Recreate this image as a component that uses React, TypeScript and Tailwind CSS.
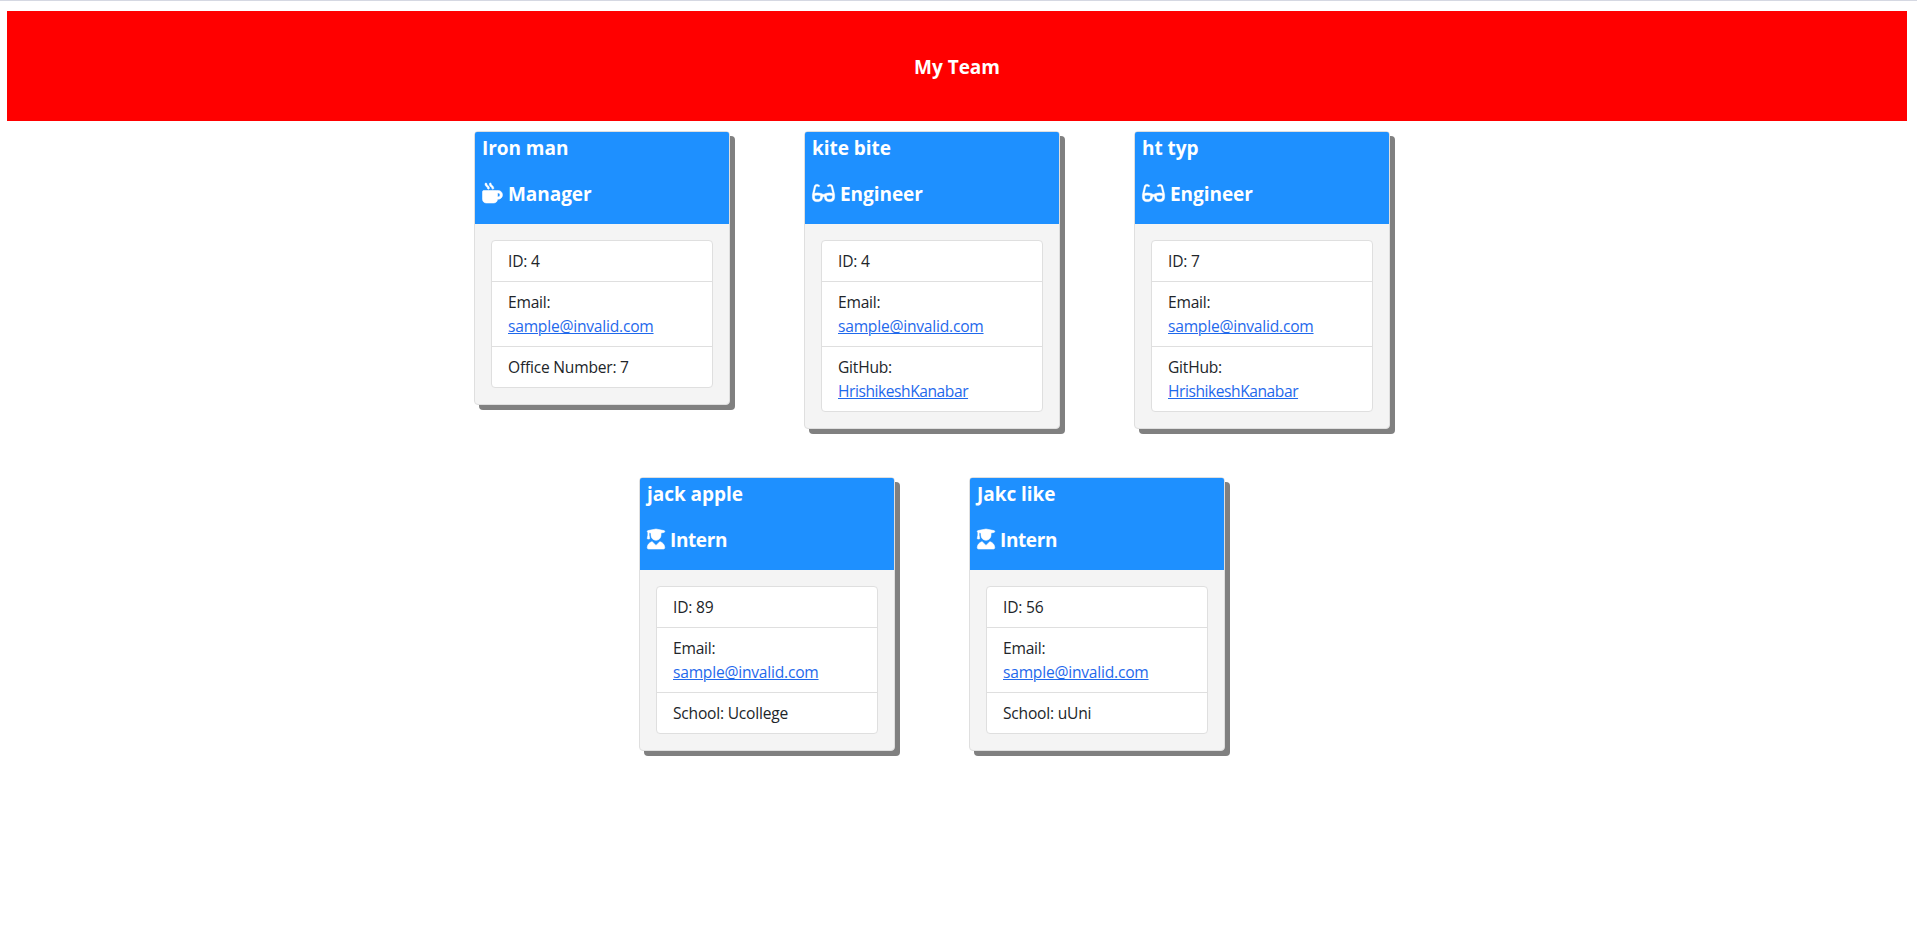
import type { ReactNode } from "react";
import { FaMugHot, FaGlasses, FaUserGraduate } from "react-icons/fa6";

type Role = "Manager" | "Engineer" | "Intern";

interface Member {
  name: string;
  role: Role;
  id: number;
  email: string;
  label: string;
  value: string;
  link?: boolean;
}

const rows: Member[][] = [
  [
    { name: "Iron man", role: "Manager", id: 4, email: "sample@invalid.com", label: "Office Number:", value: "7" },
    { name: "kite bite", role: "Engineer", id: 4, email: "sample@invalid.com", label: "GitHub:", value: "HrishikeshKanabar", link: true },
    { name: "ht typ", role: "Engineer", id: 7, email: "sample@invalid.com", label: "GitHub:", value: "HrishikeshKanabar", link: true },
  ],
  [
    { name: "jack apple", role: "Intern", id: 89, email: "sample@invalid.com", label: "School:", value: "Ucollege" },
    { name: "Jakc like", role: "Intern", id: 56, email: "sample@invalid.com", label: "School:", value: "uUni" },
  ],
];

const icons: Record<Role, ReactNode> = {
  Manager: <FaMugHot className="-mt-0.5 h-[20px] w-[21px] overflow-visible stroke-current stroke-[14px]" />,
  Engineer: <FaGlasses className="-mt-0.5 h-[20px] w-[23px] overflow-visible stroke-current stroke-[6px]" />,
  Intern: <FaUserGraduate className="-mt-0.5 h-[20px] w-[18px] overflow-visible stroke-current stroke-[14px]" />,
};

function TextLink({ children, className = "" }: { children: ReactNode; className?: string }) {
  return (
    <a href="#" className={`block w-fit text-[#1f69ec] underline decoration-1 underline-offset-1 ${className}`}>
      {children}
    </a>
  );
}

function Card({ member }: { member: Member }) {
  return (
    <article className="w-64 rounded-[4px] border border-[#dfdfdf] bg-[#f4f4f4] shadow-[5px_5px_0_#808080]">
      <header className="h-[92px] rounded-t-[2px] bg-[#1e90ff] pt-1 pl-[7px] text-[19px] leading-6 font-bold tracking-[-0.05px] text-white">
        <h2>{member.name}</h2>
        <h3 className="mt-[22px] flex items-center gap-[5px]">
          {icons[member.role]}
          <span className={member.role === "Intern" ? "tracking-[-0.4px]" : ""}>{member.role}</span>
        </h3>
      </header>
      <div className="p-4">
        <ul className="divide-y divide-[#dfdfdf] rounded-[4px] border border-[#dfdfdf] bg-white text-[15.6px] leading-6 tracking-[-0.22px] text-[#212529]">
          <li className="px-4 py-2">ID: {member.id}</li>
          <li className="px-4 py-2">
            Email: <TextLink>{member.email}</TextLink>
          </li>
          <li className="px-4 py-2">
            {member.label}{" "}
            {member.link ? <TextLink className="tracking-[-0.45px]">{member.value}</TextLink> : member.value}
          </li>
        </ul>
      </div>
    </article>
  );
}

export default function App() {
  return (
    <div className="min-h-[928px] border-t border-[#d5d8e2] bg-white pt-2.5 font-['Open_Sans','Noto_Sans',sans-serif]">
      <div className="mr-2.5 ml-[7px] flex h-[110px] items-center justify-center bg-[red] pt-0.5">
        <h1 className="text-[19px] leading-6 font-bold text-white">My Team</h1>
      </div>
      <main className="mt-2.5 mr-[53px] flex flex-col gap-12">
        {rows.map((row, i) => (
          <section key={i} className="flex items-start justify-center gap-[74px]">
            {row.map((member) => (
              <Card key={member.name} member={member} />
            ))}
          </section>
        ))}
      </main>
    </div>
  );
}
